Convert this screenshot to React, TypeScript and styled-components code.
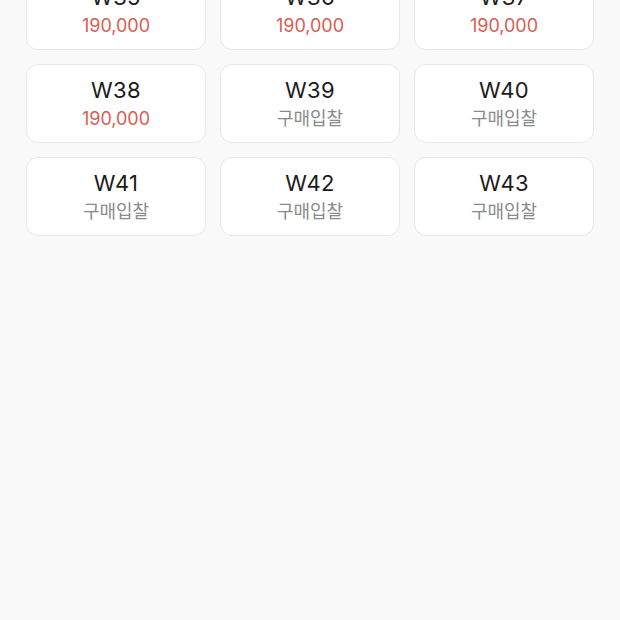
import * as React from "react";
import styled, { createGlobalStyle } from "styled-components";

const GlobalStyle = createGlobalStyle`
  html, body {
    margin: 0;
    padding: 0;
    background: #f9f9f9;
    font-family: Inter, "Noto Sans CJK KR", "Noto Sans", sans-serif;
  }
`;

const Page = styled.div`
  width: 620px;
  height: 620px;
  overflow: hidden;
  background: #f9f9f9;
`;

// list is scrolled, so the first row sits partly above the top edge
const SizeGrid = styled.div`
  display: grid;
  grid-template-columns: repeat(3, 180px);
  column-gap: 14px;
  row-gap: 14px;
  padding: 0 26px;
  margin-top: -29px;
`;

const SizeCard = styled.button`
  height: 79px;
  box-sizing: border-box;
  background: #ffffff;
  border: 1px solid #e8e8e8;
  border-radius: 12px;
  display: flex;
  flex-direction: column;
  align-items: center;
  justify-content: center;
  gap: 5px;
  padding: 0;
  cursor: pointer;
  font-family: inherit;
`;

const SizeLabel = styled.span`
  font-size: 22px;
  line-height: 26px;
  color: #1c1c1c;
  letter-spacing: 0.3px;
`;

const PriceLabel = styled.span<{ $bid: boolean }>`
  font-size: 18px;
  line-height: 22px;
  color: ${(props) => (props.$bid ? "#8a8a8a" : "#d85d52")};
`;

const sizes = [
  { size: "W35", price: "190,000" },
  { size: "W36", price: "190,000" },
  { size: "W37", price: "190,000" },
  { size: "W38", price: "190,000" },
  { size: "W39", price: null },
  { size: "W40", price: null },
  { size: "W41", price: null },
  { size: "W42", price: null },
  { size: "W43", price: null },
];

export default function App() {
  return (
    <Page>
      <GlobalStyle />
      <SizeGrid>
        {sizes.map((s) => (
          <SizeCard key={s.size}>
            <SizeLabel>{s.size}</SizeLabel>
            <PriceLabel $bid={!s.price}>{s.price || "구매입찰"}</PriceLabel>
          </SizeCard>
        ))}
      </SizeGrid>
    </Page>
  );
}
